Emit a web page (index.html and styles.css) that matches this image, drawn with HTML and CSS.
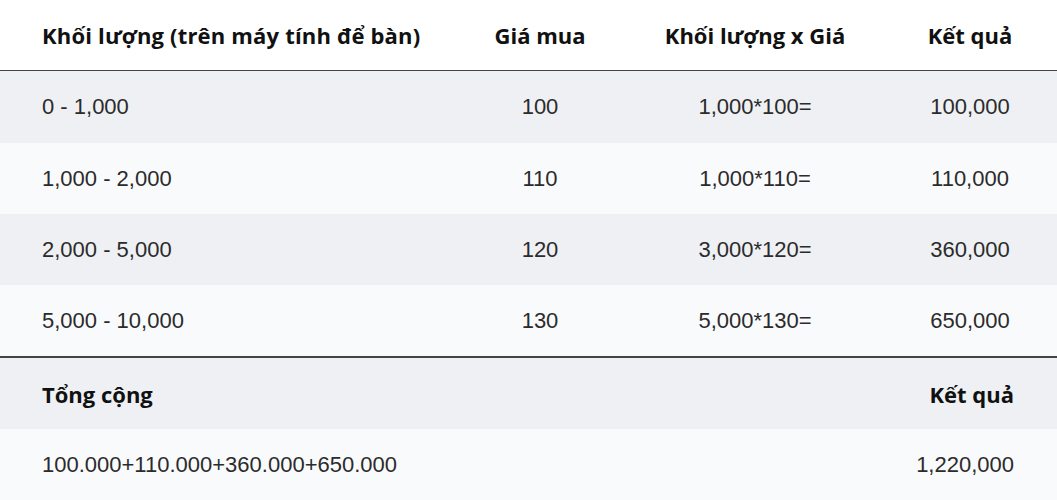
FILE: index.html
```html
<!DOCTYPE html>
<html lang="vi">
<head>
<meta charset="utf-8">
<link rel="stylesheet" href="styles.css">
</head>
<body>
<table class="price-table">
  <colgroup>
    <col class="c1"><col class="c2"><col class="c3"><col class="c4">
  </colgroup>
  <thead>
    <tr class="head">
      <th class="left wide">Khối lượng (trên máy tính để bàn)</th>
      <th>Giá mua</th>
      <th>Khối lượng x Giá</th>
      <th class="last">Kết quả</th>
    </tr>
  </thead>
  <tbody class="body">
    <tr class="grey"><td class="left">0 - 1,000</td><td>100</td><td>1,000*100=</td><td class="last">100,000</td></tr>
    <tr class="light"><td class="left">1,000 - 2,000</td><td>110</td><td>1,000*110=</td><td class="last">110,000</td></tr>
    <tr class="grey"><td class="left">2,000 - 5,000</td><td>120</td><td>3,000*120=</td><td class="last">360,000</td></tr>
    <tr class="light"><td class="left">5,000 - 10,000</td><td>130</td><td>5,000*130=</td><td class="last">650,000</td></tr>
  </tbody>
  <tfoot class="foot">
    <tr class="grey total-head"><th class="left">Tổng cộng</th><th></th><th></th><th class="right">Kết quả</th></tr>
    <tr class="light"><td class="left">100.000+110.000+360.000+650.000</td><td></td><td></td><td class="right">1,220,000</td></tr>
  </tfoot>
</table>
</body>
</html>
```
FILE: styles.css
```css
html, body {
  margin: 0;
  padding: 0;
  background: #ffffff;
}
.price-table {
  width: 1057px;
  border-collapse: collapse;
  table-layout: fixed;
  font-family: "Liberation Sans", Arial, sans-serif;
  color: #222;
}
.c1 { width: 470px; }
.c2 { width: 140px; }
.c3 { width: 290px; }
.c4 { width: 157px; }
th, td {
  text-align: center;
  padding: 0;
  white-space: nowrap;
}
th {
  font-family: "Open Sans", "Noto Sans", sans-serif;
  font-weight: 700;
  font-size: 22px;
  color: #111;
}
.wide { letter-spacing: 0.18px; }
td {
  font-size: 22px;
  color: #2b2b2b;
}
.last { padding-right: 17px; }
.head th { height: 70px; border-bottom: 1px solid #444; }
.body td { height: 71px; }
.body tr:first-child td { height: 72px; }
.foot tr:first-child th { border-top: 2px solid #444; }
.foot th, .foot td { height: 71px; }
.left { text-align: left; padding-left: 42px; }
.right { text-align: right; padding-right: 43px; }
.grey { background: #eef0f4; }
.light { background: #f9fafc; }
```
